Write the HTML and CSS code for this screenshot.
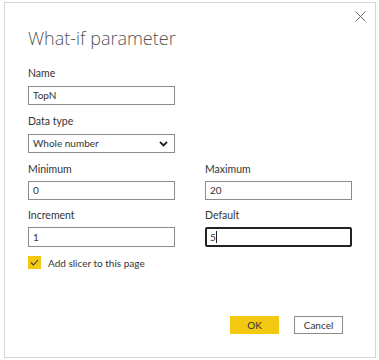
FILE: index.html
```html
<!DOCTYPE html>
<html>
<head>
<meta charset="utf-8">
<link rel="stylesheet" href="styles.css">
</head>
<body>
<div class="dialog">
  <button class="close" aria-label="Close">
    <svg width="11" height="11" viewBox="0 0 11 11"><path d="M0.5 0.5 L10.5 10.5 M10.5 0.5 L0.5 10.5" stroke="#666" stroke-width="1" fill="none"/></svg>
  </button>
  <h1 class="title">What-if parameter</h1>
  <div class="field">
    <div class="label first">Name</div>
    <div class="input">TopN</div>
  </div>
  <div class="field">
    <div class="label">Data type</div>
    <div class="input select">Whole number
      <svg class="chev" width="9" height="6" viewBox="0 0 9 6"><path d="M1 1 L4.5 4.5 L8 1" stroke="#222" stroke-width="1.8" fill="none"/></svg>
    </div>
  </div>
  <div class="row">
    <div class="field col">
      <div class="label">Minimum</div>
      <div class="input">0</div>
    </div>
    <div class="field col">
      <div class="label">Maximum</div>
      <div class="input">20</div>
    </div>
  </div>
  <div class="row second">
    <div class="field col">
      <div class="label">Increment</div>
      <div class="input tall">1</div>
    </div>
    <div class="field col">
      <div class="label">Default</div>
      <div class="input tall focused">5<span class="caret"></span></div>
    </div>
  </div>
  <div class="check">
    <span class="box"><svg width="13" height="13" viewBox="0 0 13 13"><path d="M3 6.5 L5.5 9 L10 4" stroke="#3a3a3a" stroke-width="1.1" fill="none"/></svg></span>
    <span class="check-text">Add slicer to this page</span>
  </div>
  <div class="buttons">
    <button class="btn primary">OK</button>
    <button class="btn">Cancel</button>
  </div>
</div>
</body>
</html>
```
FILE: styles.css
```css
html, body {
  margin: 0;
  padding: 0;
  background: #fff;
}
body {
  font-family: Lato, "Noto Sans", sans-serif;
  color: #333;
}
.dialog {
  position: relative;
  box-sizing: border-box;
  margin: 2px 0 0 4px;
  width: 372px;
  height: 356px;
  border: 1px solid #d6d6d6;
  padding: 0 23px;
}
.close {
  position: absolute;
  top: 8px;
  right: 9px;
  border: 0;
  background: none;
  padding: 0;
  width: 11px;
  height: 11px;
  display: block;
}
.close svg { display: block; }
.title {
  margin: 0;
  padding-top: 22px;
  font-family: "Open Sans", sans-serif;
  font-weight: 300;
  font-size: 18px;
  line-height: 26px;
  color: #555;
}
.field {
  display: flex;
  flex-direction: column;
}
.label {
  font-size: 10.5px;
  line-height: 16px;
  color: #333;
  margin-top: 8px;
  margin-bottom: 5px;
}
.label.first { margin-top: 14px; }
.input {
  box-sizing: border-box;
  width: 147px;
  height: 19px;
  border: 1px solid #8c8c8c;
  font-size: 10px;
  line-height: 17px;
  padding: 0 4px;
  color: #333;
  display: flex;
  align-items: center;
}
.input.tall { height: 20px; }
.select {
  justify-content: space-between;
  padding-right: 6px;
}
.chev { display: block; }
.row {
  display: grid;
  grid-template-columns: 177px 147px;
}
.row .label { margin-top: 8px; margin-bottom: 4px; }
.row.second .label { margin-top: 7px; margin-bottom: 4px; }
.focused {
  border: 2px solid #222;
  border-radius: 2px;
  padding-left: 3px;
}
.caret {
  display: inline-block;
  width: 1px;
  height: 12px;
  background: #222;
}
.check {
  display: flex;
  align-items: center;
  margin-top: 9px;
  gap: 7px;
}
.box {
  width: 13px;
  height: 13px;
  background: #f2c811;
  display: block;
}
.box svg { display: block; }
.check-text {
  font-size: 10px;
  color: #333;
}
.buttons {
  display: flex;
  justify-content: flex-end;
  gap: 15px;
  margin-top: 47px;
  padding-right: 9px;
}
.btn {
  box-sizing: border-box;
  width: 49px;
  height: 18px;
  border: 1px solid #8c8c8c;
  background: #fff;
  font-family: Lato, sans-serif;
  font-size: 10px;
  color: #333;
  padding: 0;
}
.btn.primary {
  background: #f2c811;
  border-color: #f2c811;
}
```
